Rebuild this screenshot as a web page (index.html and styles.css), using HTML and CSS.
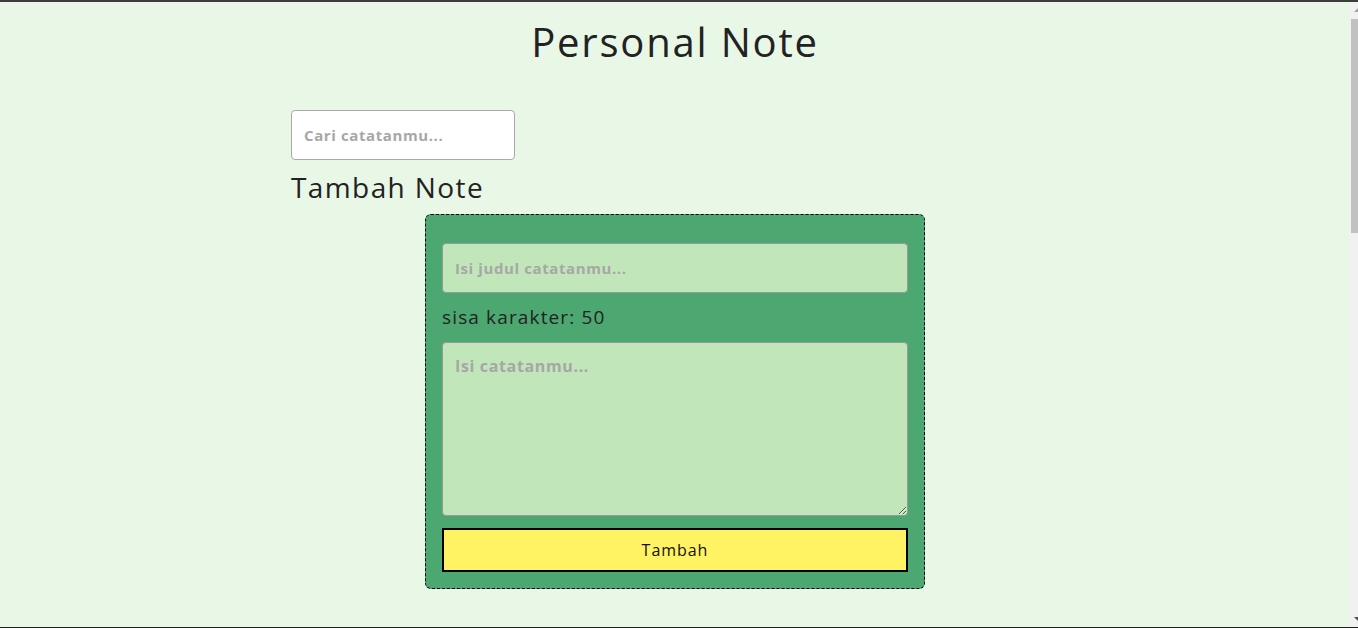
FILE: index.html
```html
<!DOCTYPE html>
<html lang="id">
<head>
<meta charset="utf-8">
<title>Personal Note</title>
<link rel="stylesheet" href="styles.css">
</head>
<body>
<header class="app-header">
  <h1 class="app-title">Personal Note</h1>
</header>
<main class="app-body">
  <input class="search-input" type="text" placeholder="Cari catatanmu...">
  <h2 class="section-title">Tambah Note</h2>
  <form class="note-form" onsubmit="return false">
    <input class="note-title-input" type="text" placeholder="Isi judul catatanmu...">
    <p class="char-count">sisa karakter: 50</p>
    <textarea class="note-body-input" placeholder="Isi catatanmu..."></textarea>
    <button class="add-button" type="submit">Tambah</button>
  </form>
</main>
<div class="fake-scrollbar" aria-hidden="true">
  <span class="fake-scrollbar-up"></span>
  <span class="fake-scrollbar-thumb"></span>
  <span class="fake-scrollbar-down"></span>
</div>
<div class="window-edge" aria-hidden="true"></div>
</body>
</html>
```

FILE: styles.css
```css
html {
  border-top: 2px solid #3c3c3c;
}
body {
  margin: 0 8px 0 0;
  background: #e8f7e6;
  color: #222;
  font-family: "Open Sans", "DejaVu Sans", sans-serif;
}
.app-header {
  display: flex;
  justify-content: center;
  padding-top: 12px;
}
.app-title {
  margin: 0;
  font-size: 40px;
  font-weight: 400;
  line-height: 56px;
  letter-spacing: 0.045em;
}
.app-body {
  width: 768px;
  margin: 0 auto;
  padding-top: 40px;
  display: flex;
  flex-direction: column;
  align-items: flex-start;
}
.search-input {
  box-sizing: border-box;
  width: 224px;
  height: 50px;
  padding: 0 12px;
  border: 1px solid #a9a9a9;
  border-radius: 4px;
  background: #fff;
  font-family: inherit;
  font-size: 15px;
  letter-spacing: 0.04em;
}
.search-input::placeholder,
.note-title-input::placeholder,
.note-body-input::placeholder {
  color: #a7a7a7;
  font-weight: 700;
}
.section-title {
  margin: 9px 0 9px;
  font-size: 28px;
  font-weight: 400;
  line-height: 36px;
  letter-spacing: 0.05em;
}
.note-form {
  box-sizing: border-box;
  width: 500px;
  align-self: center;
  padding: 28px 16px 16px;
  border: 1px dashed #000;
  border-radius: 6px;
  background: #4ca771;
  display: flex;
  flex-direction: column;
}
.note-title-input {
  box-sizing: border-box;
  height: 50px;
  padding: 0 12px;
  border: 1px solid #999;
  border-radius: 4px;
  background: #c0e6ba;
  font-family: inherit;
  font-size: 15px;
  letter-spacing: 0.04em;
}
.char-count {
  margin: 12px 0 13px;
  font-size: 19px;
  line-height: 24px;
  letter-spacing: 0.06em;
}
.note-body-input {
  box-sizing: border-box;
  height: 174px;
  padding: 12px;
  border: 1px solid #999;
  border-radius: 4px;
  background: #c0e6ba;
  font-family: inherit;
  font-size: 16px;
  letter-spacing: 0.04em;
}
.add-button {
  box-sizing: border-box;
  height: 44px;
  margin-top: 12px;
  border: 2px solid #000;
  background: #fff263;
  color: #111;
  font-family: inherit;
  font-size: 16px;
  letter-spacing: 0.06em;
  cursor: pointer;
}
.fake-scrollbar {
  position: fixed;
  top: 2px;
  right: 0;
  bottom: 1px;
  width: 8px;
  background: #f1f1f1;
  display: flex;
  flex-direction: column;
  align-items: flex-end;
}
.fake-scrollbar-up {
  margin-top: 6px;
  width: 0;
  height: 0;
  border-left: 4px solid transparent;
  border-bottom: 4px solid #a3a3a3;
}
.fake-scrollbar-thumb {
  margin-top: 7px;
  width: 7px;
  height: 214px;
  background: #c1c1c1;
}
.fake-scrollbar-down {
  margin-top: auto;
  margin-bottom: 6px;
  width: 0;
  height: 0;
  border-left: 4px solid transparent;
  border-top: 4px solid #505050;
}
.window-edge {
  position: fixed;
  left: 0;
  right: 0;
  bottom: 0;
  height: 1px;
  background: #1e1e1e;
}
```
